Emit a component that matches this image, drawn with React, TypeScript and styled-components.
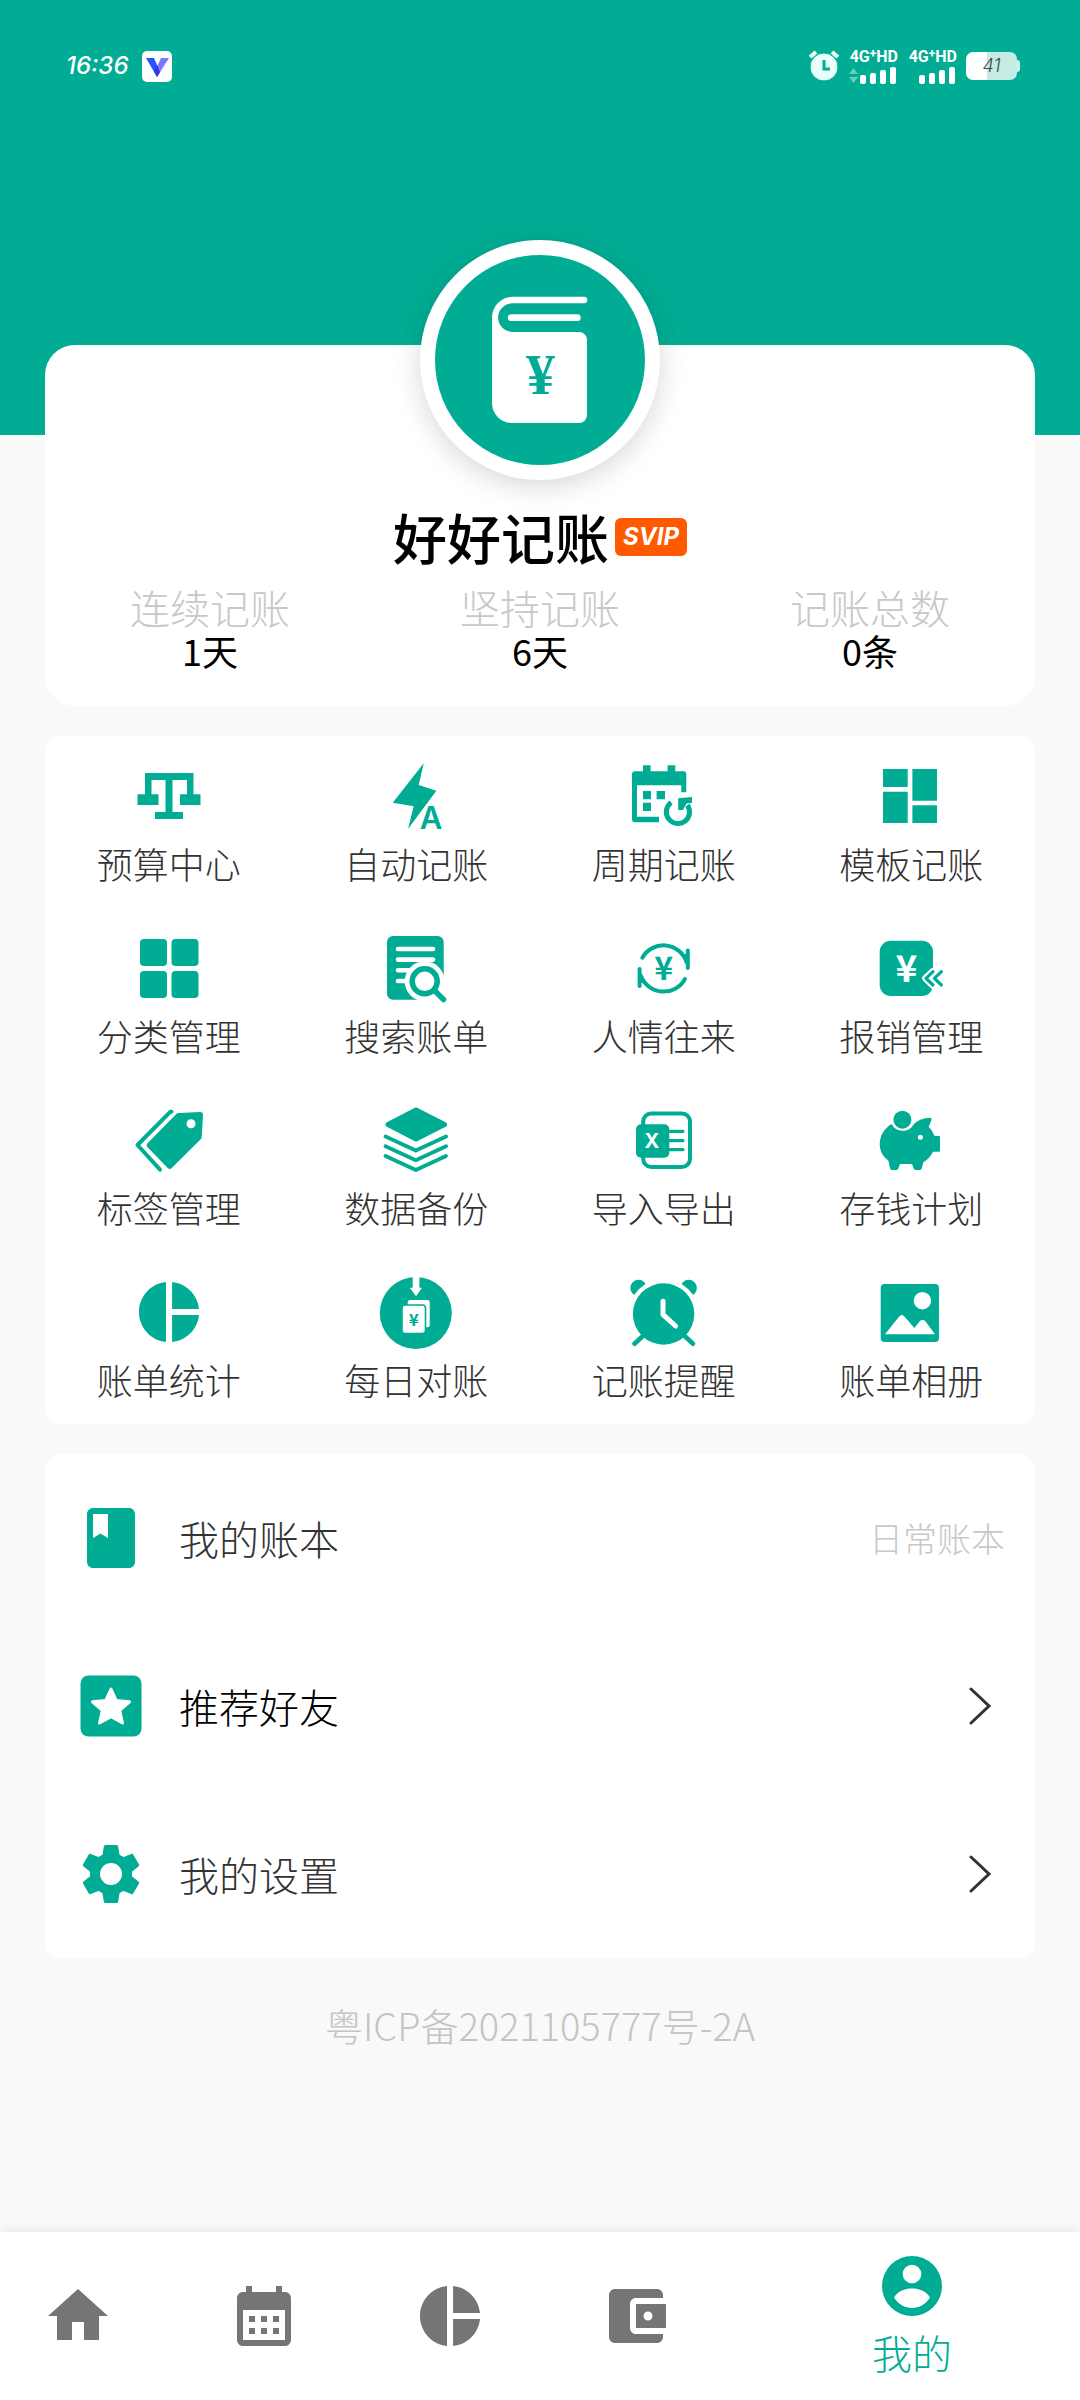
import React from "react";
import styled, { createGlobalStyle } from "styled-components";

const GREEN = "#00ad94";
const GREY = "#757575";
const SANS = '"Noto Sans CJK SC", "Noto Sans", sans-serif';

const GlobalStyle = createGlobalStyle`
  * { box-sizing: border-box; }
  body { margin: 0; background: #f9f9f9; font-family: ${SANS}; font-weight: 300; color: #333; }
  button { border: 0; padding: 0; background: none; font: inherit; color: inherit; cursor: pointer; }
  a { color: inherit; text-decoration: none; }
  svg { display: block; overflow: visible; flex: none; }
`;

const Page = styled.div`
  min-height: 100vh;
  display: flex;
  flex-direction: column;
`;

const Header = styled.header`
  height: 435px;
  padding: 45px 60px 0 66px;
  background: ${GREEN};
`;

const StatusBar = styled.div`
  display: flex;
  align-items: center;
  height: 42px;
  color: #fff;
`;

const Time = styled.time`
  margin-right: 14px;
  font: italic 500 24px/42px Inter, sans-serif;
`;

const StatusRight = styled.div`
  margin-left: auto;
  display: flex;
  align-items: center;
  gap: 9px;
`;

const Signal = styled.div`
  display: flex;
  flex-direction: column;
  align-items: flex-end;
  gap: 2px;
  width: 50px;
`;

const Network = styled.span`
  display: flex;
  font: 700 16px/16px Roboto, sans-serif;

  sup { font-size: 12px; line-height: 10px; }
`;

const Battery = styled.div`
  display: flex;
  align-items: center;

  &::after {
    content: "";
    width: 3px;
    height: 12px;
    border-radius: 0 3px 3px 0;
    background: #cfefea;
  }
`;

const BatteryCell = styled.span`
  width: 51px;
  height: 28px;
  border-radius: 7px;
  background: linear-gradient(90deg, #fff 41%, #c5ebe4 41%);
  color: #444;
  font: italic 300 18px/28px Inter, sans-serif;
  text-align: center;
`;

const Main = styled.main`
  flex: 1;
  display: flex;
  flex-direction: column;
  gap: 30px;
  margin-top: -90px;
  padding: 0 45px 36px;
`;

const Card = styled.section<{ $radius: number }>`
  border-radius: ${(p) => p.$radius}px;
  background: #fff;
`;

const ProfileCard = styled(Card)`
  display: flex;
  flex-direction: column;
  align-items: center;
  padding-bottom: 34px;
`;

const Avatar = styled.div`
  width: 240px;
  height: 240px;
  margin-top: -105px;
  border: 15px solid #fff;
  border-radius: 50%;
  background: ${GREEN};
  box-shadow: 0 6px 28px rgba(0, 0, 0, 0.16);
`;

const NameRow = styled.div`
  display: flex;
  align-items: center;
  gap: 6px;
  margin-top: 18px;
`;

const Name = styled.h1`
  margin: 0;
  font-size: 54px;
  line-height: 78px;
  font-weight: 500;
  color: #000;
`;

const Badge = styled.span`
  width: 72px;
  height: 38px;
  border-radius: 6px;
  background: #ff5a00;
  color: #fff;
  font: italic 700 24px/38px Inter, sans-serif;
  text-align: center;
`;

const Stats = styled.dl`
  display: grid;
  grid-template-columns: repeat(3, 1fr);
  width: 100%;
  margin: 10px 0 0;
  font-size: 40px;
  line-height: 42px;
  text-align: center;

  dt { color: #c8c8c8; }
  dd { margin: 0; color: #000; font-size: 36px; line-height: 44px; font-weight: 400; }
`;

const ToolGrid = styled(Card)`
  display: grid;
  grid-template-columns: repeat(4, 1fr);
`;

const Tool = styled.button`
  display: flex;
  flex-direction: column;
  align-items: center;
  gap: 10px;
  padding: 24px 0;
  font-size: 36px;
  line-height: 42px;
`;

const MenuRow = styled.button<{ $strong?: boolean }>`
  display: flex;
  align-items: center;
  gap: 32px;
  width: 100%;
  height: 168px;
  padding: 0 30px;
  font-size: 40px;
  line-height: 60px;
  color: ${(p) => (p.$strong ? "#000" : "#333")};
`;

const MenuLabel = styled.span`
  flex: 1;
  text-align: left;
`;

const MenuValue = styled.span`
  font-size: 34px;
  color: #c8c8c8;
`;

const Record = styled.footer`
  margin-top: 16px;
  font-size: 38px;
  line-height: 42px;
  text-align: center;
  color: #c4c4c4;
`;

const TabBar = styled.nav`
  position: sticky;
  bottom: 0;
  display: flex;
  gap: 30px;
  height: 168px;
  background: #fff;
  box-shadow: 0 0 12px rgba(0, 0, 0, 0.1);
`;

const Tab = styled.a<{ $active?: boolean }>`
  flex: ${(p) => (p.$active ? "1" : "0 0 156px")};
  display: flex;
  flex-direction: column;
  align-items: center;
  justify-content: center;
  font-size: 40px;
  line-height: 60px;
  color: ${(p) => (p.$active ? GREEN : GREY)};
`;

function Icon({ size = 72, box = 72, children }: { size?: number; box?: number; children: React.ReactNode }) {
  return (
    <svg width={size} height={size} viewBox={`0 0 ${box} ${box}`} fill="currentColor" aria-hidden="true">
      {children}
    </svg>
  );
}

const ToolIcon = styled.span`
  color: ${GREEN};
`;

function Yen({ x, y, size, fill, serif }: { x: number; y: number; size: number; fill: string; serif?: boolean }) {
  return (
    <text
      x={x}
      y={y}
      fontSize={size}
      fontWeight="700"
      textAnchor="middle"
      fill={fill}
      fontFamily={serif ? '"Liberation Serif", serif' : SANS}
    >
      ¥
    </text>
  );
}

const piePath =
  "M11 2v20c-5.07-.5-9-4.79-9-10s3.93-9.5 9-10zm2.03 0v8.99H22c-.47-4.74-4.24-8.52-8.97-8.99zm0 11.01V22c4.74-.47 8.5-4.25 8.97-8.99h-8.97z";

const scale = (
  <path d="M12 13h48.500v21.300h7V45H47V34.300h7V20H39.500v32H50v7H22v-7h10.500V20H18.500v14.300h7V45h-21V34.300H12z" />
);

const bolt = (
  <>
    <path d="M43.700 3.300 38.700 25l17.700 5.700L28 69l5.700-22.700-21-3.600z" />
    <text
      x="51"
      y="69"
      fontSize="31"
      fontWeight="600"
      fontFamily="Inter, sans-serif"
      textAnchor="middle"
      stroke="#fff"
      strokeWidth="4"
      paintOrder="stroke"
    >
      A
    </text>
  </>
);

const cycle = (
  <>
    <path d="M15 5.300h7.600v6h17v-6h7.700v6h8a3 3 0 0 1 3 3v18h-5v-7H9v31.400h22v5.600H7a3 3 0 0 1-3-3V14.300a3 3 0 0 1 3-3h8z" />
    <path d="M15 31h8v8.300h-8zM28.600 31H37v8.300h-8.400zM15 42.700h8V51h-8z" />
    <path d="M43.200 42.500a11.600 11.600 0 1 0 16.200 2.800" fill="none" stroke="currentColor" strokeWidth="5" />
    <path d="M50.200 38.300 64 37v6l-5.500.5L55 50h-4.800z" />
  </>
);

const template = <path d="M8 9h24.700v18H8zM8 31.700h24.700V63H8zM37.400 9H62v31.700H37.400zM37.400 45.300H62V63H37.400z" />;

const four = (
  <>
    <rect x="7" y="7" width="27" height="27" rx="4" />
    <rect x="38.500" y="7" width="27" height="27" rx="4" />
    <rect x="7" y="39" width="27" height="27" rx="4" />
    <rect x="38.500" y="39" width="27" height="27" rx="4" />
  </>
);

const search = (
  <>
    <rect x="7" y="4" width="56.700" height="63.700" rx="6" />
    <path d="M18 17h35M18 27.600h35M18 38.200h14M18 49h10" stroke="#fff" strokeWidth="4.600" strokeLinecap="round" />
    <path d="M44 49h22v20H38z" fill="#fff" />
    <circle cx="44.700" cy="49.300" r="20" fill="#fff" />
    <circle cx="44.700" cy="49.300" r="12.500" fill="#fff" stroke="currentColor" strokeWidth="5.500" />
    <path d="m54.500 58.500 9 9" stroke="currentColor" strokeWidth="5.500" strokeLinecap="round" />
  </>
);

const exchange = (
  <>
    <g fill="none" stroke="currentColor" strokeWidth="4" strokeLinecap="round" strokeLinejoin="round">
      <path d="M14.300 25.700A24.300 24.300 0 0 1 58.500 30M59.800 18.500V36" />
      <path d="M57 47A24.300 24.300 0 0 1 13 44M11.600 37v17" />
    </g>
    <path d="m54 22 6 14.500V22zM17.500 51l-6-14.500V51z" />
    <Yen x={35.700} y={48} size={32} fill="currentColor" />
  </>
);

const reimburse = (
  <>
    <rect x="4.700" y="8.700" width="53.300" height="55.300" rx="11" />
    <Yen x={31.500} y={50} size={37} fill="#fff" />
    <g fill="none" strokeLinecap="round" strokeLinejoin="round">
      <path d="m58 39.700-7 6.600 7 6.700M66.400 39.700l-7 6.600 7 6.700" stroke="#fff" strokeWidth="7.500" />
      <path d="m58 39.700-7 6.600 7 6.700M66.400 39.700l-7 6.600 7 6.700" stroke="currentColor" strokeWidth="3.200" />
    </g>
  </>
);

const tag = (
  <>
    <path d="M43 10.200Q44 9 46 9l21-.9q3 0 3 3L68.700 33q0 1.300-1 2.300L38.500 64.200q-1.800 1.600-3.500 0L14.300 43q-1.600-1.700 0-3.400z" />
    <path d="M38.500 7.700h-1L4.500 41 27 65.700" fill="none" stroke="currentColor" strokeWidth="4" strokeLinecap="round" strokeLinejoin="round" />
    <circle cx="58" cy="19.700" r="4.500" fill="#fff" />
  </>
);

const layers = (
  <g stroke="currentColor" strokeLinecap="round" strokeLinejoin="round">
    <path d="M36 6 64.500 20.500 36 35 8 20.500z" strokeWidth="5" />
    <path
      d="m5.500 32.500 30.300 14 30.300-14M5.500 42.200l30.300 14 30.300-14M5.500 52l30.300 14L66 52"
      fill="none"
      strokeWidth="3.800"
    />
  </g>
);

const sheet = (
  <>
    <rect x="15.200" y="9.500" width="46.800" height="53.500" rx="8" fill="none" stroke="currentColor" strokeWidth="4" />
    <rect x="8" y="20.300" width="33.300" height="33.400" rx="5" />
    <path d="M42 27.300h13M42 36.700h13M42 45.700h13" stroke="currentColor" strokeWidth="3.200" strokeLinecap="round" />
    <text x="24" y="44" fontSize="20" fontWeight="700" fontFamily="Inter, sans-serif" textAnchor="middle" fill="#fff">
      X
    </text>
  </>
);

const piggy = (
  <>
    <circle cx="27.400" cy="15.700" r="9" />
    <path d="M16.600 20C9 24.500 4.700 32 4.700 40c0 7 3.300 12.500 8.700 16.700l1.600 7.600q.4 1.600 2 1.600h4.400q1.600 0 2-1.600L25 60h12l1.600 4.300q.4 1.600 2 1.600h4.200q1.600 0 2-1.600l1.600-6Q55 54 58 47.700h6q1 0 1-1V33q0-1-1-1h-4.500Q58 27 53.700 22.700L56.500 16q.6-2-1.400-2.200Q45 14 38.600 20.500A12.500 12.500 0 0 1 16.600 20z" />
    <circle cx="45.400" cy="33.300" r="2.500" fill="#fff" />
  </>
);

const pie = (
  <g transform="scale(3)">
    <path d={piePath} />
  </g>
);

const daily = (
  <>
    <circle cx="35.800" cy="37" r="36" />
    <path d="M32.700 0h6.700v11.700H42L36 20.300l-6.200-8.600h2.900z" fill="#fff" />
    <rect x="27.700" y="24" width="22" height="27.300" rx="2.500" fill="#fff" />
    <rect x="22" y="29" width="23.500" height="28.500" rx="3" fill="#fff" stroke="currentColor" strokeWidth="1.600" />
    <Yen x={33.700} y={50} size={17} fill="currentColor" />
  </>
);

const alarm = (
  <>
    <circle cx="10.500" cy="12" r="8.200" />
    <circle cx="60.700" cy="12" r="8.200" />
    <circle cx="35.600" cy="38" r="35" fill="#fff" />
    <path d="m17 58-10.500 9.700M54.500 58 65 67.700" stroke="currentColor" strokeWidth="4.600" strokeLinecap="round" />
    <circle cx="35.600" cy="38" r="30.700" />
    <path d="M35 25.300v13.400L47.600 50" fill="none" stroke="#fff" strokeWidth="5" strokeLinecap="round" strokeLinejoin="round" />
  </>
);

const photo = (
  <>
    <rect x="5.700" y="8" width="58.300" height="58" rx="4" />
    <circle cx="47.400" cy="24.700" r="8.700" fill="#fff" />
    <path d="m10 58.300 14-17.600q3-3.400 5.600 0L39.400 52l5.300-6.700q2.800-3 5.700 0L60 58.300z" fill="#fff" />
  </>
);

const tools = [
  { label: "预算中心", icon: scale },
  { label: "自动记账", icon: bolt },
  { label: "周期记账", icon: cycle },
  { label: "模板记账", icon: template },
  { label: "分类管理", icon: four },
  { label: "搜索账单", icon: search },
  { label: "人情往来", icon: exchange },
  { label: "报销管理", icon: reimburse },
  { label: "标签管理", icon: tag },
  { label: "数据备份", icon: layers },
  { label: "导入导出", icon: sheet },
  { label: "存钱计划", icon: piggy },
  { label: "账单统计", icon: pie },
  { label: "每日对账", icon: daily },
  { label: "记账提醒", icon: alarm },
  { label: "账单相册", icon: photo },
];

const bookmark = (
  <path
    transform="scale(3)"
    d="M18 2H6c-1.100 0-2 .9-2 2v16c0 1.100.9 2 2 2h12c1.100 0 2-.9 2-2V4c0-1.100-.9-2-2-2zM6 4h5v8l-2.500-1.500L6 12V4z"
  />
);

const starBox = (
  <>
    <rect x="5.500" y="5.500" width="61" height="61" rx="8" />
    <path
      d="m36 19 5.300 11.600 13.200 1.200-9.800 8.700 2.800 12.500L36 46.800 24.500 53l2.800-12.500-9.800-8.700 13.200-1.200z"
      fill="#fff"
      stroke="#fff"
      strokeWidth="3"
      strokeLinejoin="round"
    />
  </>
);

const gear = (
  <>
    <circle cx="36" cy="36" r="21" />
    {[0, 60, 120, 180, 240, 300].map((angle) => (
      <path key={angle} d="m27 20 1.800-11.500q.3-1.500 1.700-1.500h11q1.400 0 1.700 1.500L45 20z" transform={`rotate(${angle} 36 36)`} />
    ))}
    <circle cx="36" cy="36" r="11" fill="#fff" />
  </>
);

const menu = [
  { label: "我的账本", icon: bookmark, value: "日常账本" },
  { label: "推荐好友", icon: starBox, strong: true },
  { label: "我的设置", icon: gear },
];

const tabs = [
  { label: "首页", d: "M10 20v-6h4v6h5v-8h3L12 3 2 12h3v8z" },
  {
    label: "日历",
    d: "M19 4h-1V2h-2v2H8V2H6v2H5c-1.110 0-2 .9-2 2v14c0 1.100.89 2 2 2h14c1.100 0 2-.9 2-2V6c0-1.100-.9-2-2-2zm0 16H5V10h14v10zM7 12h2v2H7zm4 0h2v2h-2zm4 0h2v2h-2zM7 16h2v2H7zm4 0h2v2h-2zm4 0h2v2h-2z",
  },
  { label: "统计", d: piePath },
  {
    label: "资产",
    d: "M21 18v1c0 1.100-.9 2-2 2H5c-1.110 0-2-.9-2-2V5c0-1.100.89-2 2-2h14c1.100 0 2 .9 2 2v1h-9c-1.110 0-2 .9-2 2v8c0 1.100.89 2 2 2h9zm-9-2h10V8H12v8zm4-2.500c-.83 0-1.500-.67-1.500-1.500s.67-1.500 1.500-1.500 1.500.67 1.500 1.500-.67 1.500-1.500 1.500z",
  },
];

function Bars({ arrows }: { arrows?: boolean }) {
  return (
    <svg width="50" height="17" viewBox="0 0 50 17" fill="#fff" aria-hidden="true">
      {arrows && <path d="m1 7 4.500-6L10 7zM1 10h9l-4.500 6z" opacity="0.4" />}
      <rect x="12" y="8" width="6" height="9" rx="2" />
      <rect x="22" y="6" width="6" height="11" rx="2" />
      <rect x="32" y="3" width="6" height="14" rx="2" />
      <rect x="42" y="0" width="6" height="17" rx="2" />
    </svg>
  );
}

export default function App() {
  return (
    <Page>
      <GlobalStyle />
      <Header>
        <StatusBar>
          <Time>16:36</Time>
          <svg width="30" height="31" viewBox="0 0 30 31" aria-hidden="true">
            <rect width="30" height="31" rx="5" fill="#fff" />
            <path d="M4 7h8l6 14-3 5z" fill="#2456ff" />
            <path d="M27 7h-8l-6 13 2 6z" fill="#7e78fb" />
            <path d="m15 14 3 7-3 5-3-6z" fill="#2f35e8" />
          </svg>
          <StatusRight>
            <svg width="30" height="30" viewBox="0 0 30 30" aria-hidden="true">
              <circle cx="15" cy="16" r="14" fill="#e9fffb" stroke={GREEN} strokeWidth="1" />
              <path d="m1 6 6-5M29 6l-6-5" stroke="#e9fffb" strokeWidth="4" />
              <path d="M15 9v9h6" fill="none" stroke={GREEN} strokeWidth="3" />
            </svg>
            <Signal>
              <Network>4G<sup>+</sup>HD</Network>
              <Bars arrows />
            </Signal>
            <Signal>
              <Network>4G<sup>+</sup>HD</Network>
              <Bars />
            </Signal>
            <Battery>
              <BatteryCell>41</BatteryCell>
            </Battery>
          </StatusRight>
        </StatusBar>
      </Header>

      <Main>
        <ProfileCard $radius={30}>
          <Avatar>
            <svg width="210" height="210" viewBox="15 15 210 210" aria-hidden="true">
              <path
                d="M164 56.700H93a21 21 0 0 0-21 21V163a20 20 0 0 0 20 20h67a8 8 0 0 0 8-8V100a8 8 0 0 0-8-8H92.500a14.300 14.300 0 0 1 0-28.800H164a3.200 3.200 0 0 0 0-6.500z"
                fill="#fff"
              />
              <rect x="87.700" y="74.300" width="73" height="6.700" rx="3.300" fill="#fff" />
              <Yen x={120.500} y={154} size={58} fill={GREEN} serif />
            </svg>
          </Avatar>
          <NameRow>
            <Name>好好记账</Name>
            <Badge>SVIP</Badge>
          </NameRow>
          <Stats>
            <div>
              <dt>连续记账</dt>
              <dd>1天</dd>
            </div>
            <div>
              <dt>坚持记账</dt>
              <dd>6天</dd>
            </div>
            <div>
              <dt>记账总数</dt>
              <dd>0条</dd>
            </div>
          </Stats>
        </ProfileCard>

        <ToolGrid $radius={15}>
          {tools.map((tool) => (
            <Tool key={tool.label} type="button">
              <ToolIcon>
                <Icon>{tool.icon}</Icon>
              </ToolIcon>
              {tool.label}
            </Tool>
          ))}
        </ToolGrid>

        <Card $radius={15}>
          {menu.map((row) => (
            <MenuRow key={row.label} type="button" $strong={row.strong}>
              <ToolIcon>
                <Icon>{row.icon}</Icon>
              </ToolIcon>
              <MenuLabel>{row.label}</MenuLabel>
              {row.value ? (
                <MenuValue>{row.value}</MenuValue>
              ) : (
                <Icon size={48} box={48}>
                  <path d="m14 7 18 17-18 17" fill="none" stroke="#333" strokeWidth="3" strokeLinecap="round" />
                </Icon>
              )}
            </MenuRow>
          ))}
        </Card>

        <Record>粤ICP备2021105777号-2A</Record>
      </Main>

      <TabBar>
        {tabs.map((tab) => (
          <Tab key={tab.label} href="#" aria-label={tab.label}>
            <Icon box={24}>
              <path d={tab.d} />
            </Icon>
          </Tab>
        ))}
        <Tab href="#" $active aria-current="page">
          <Icon>
            <circle cx="36" cy="36" r="30" />
            <circle cx="36" cy="24" r="9.300" fill="#fff" />
            <path d="M18 47.500C22 41 29 38.500 36 38.500S50 41 54 47.500C50 54 43 58 36 58s-14-4-18-10.500z" fill="#fff" />
          </Icon>
          我的
        </Tab>
      </TabBar>
    </Page>
  );
}
